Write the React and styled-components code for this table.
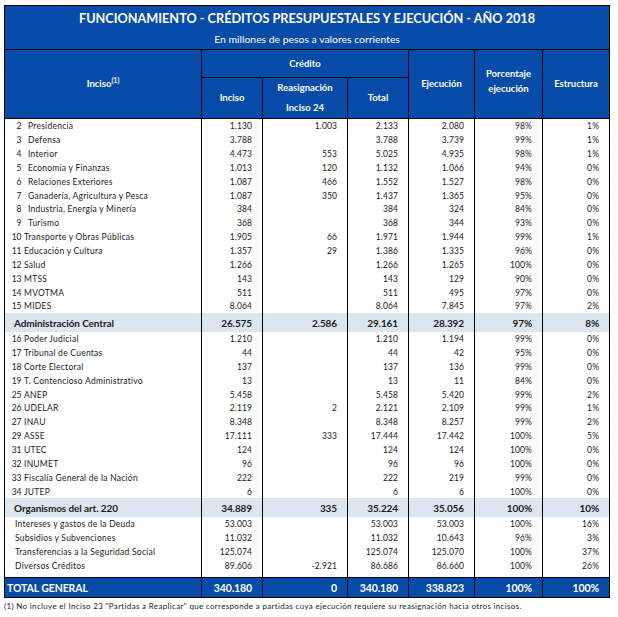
import React from 'react';
import styled, { createGlobalStyle } from 'styled-components';

const BLUE = '#064ca8';

const GlobalStyle = createGlobalStyle`
  body {
    margin: 0;
    background: #fff;
    font-family: Lato, "Liberation Sans", sans-serif;
  }
`;

const Page = styled.div`
  padding: 5px 0 0 4px;
  width: 605px;
`;

const Table = styled.table`
  width: 605px;
  border-collapse: collapse;
  table-layout: fixed;
  border: 1px solid #000;
  color: #1b1b1b;
`;

const TitleCell = styled.th`
  background: ${BLUE};
  color: #fff;
  height: 43px;
  padding: 0;
  border-bottom: 1px solid #000;
  text-align: center;
  vertical-align: top;
`;

const Title = styled.div`
  font-weight: 700;
  font-size: 12.7px;
  line-height: 16px;
  padding-top: 4px;
`;

const Subtitle = styled.div`
  font-weight: 400;
  font-size: 10.4px;
  line-height: 12px;
  padding-top: 7px;
`;

const HeadRow = styled.tr`
  height: ${p => p.$h}px;
`;

const HeadCell = styled.th`
  background: ${BLUE};
  color: #fff;
  font-weight: 700;
  font-size: 9.5px;
  line-height: ${p => p.$lh || 12}px;
  padding: ${p => p.$pad || '0'};
  border: 1px solid #000;
  text-align: center;
  vertical-align: middle;
`;

const Sup = styled.sup`
  font-size: 7px;
  vertical-align: 4px;
  line-height: 0;
`;

const Row = styled.tr`
  height: ${p => p.$h}px;
  background: ${p => p.$bg || 'transparent'};
  color: ${p => p.$color || 'inherit'};
  font-weight: ${p => (p.$bold ? 700 : 400)};
  font-size: ${p => p.$size}px;
  border-top: ${p => (p.$lined ? '1px solid #000' : 'none')};
`;

const Cell = styled.td`
  padding: 0 10px 0 0;
  text-align: right;
  white-space: nowrap;
  border-left: 1px solid #000;
  border-right: 1px solid #000;
  letter-spacing: ${p => (p.$bold ? '-0.1px' : '0.1px')};
`;

const NameCell = styled.td`
  padding: 0 0 0 ${p => p.$indent}px;
  text-align: left;
  white-space: nowrap;
  border-left: 1px solid #000;
  border-right: 1px solid #000;
  letter-spacing: ${p => (p.$bold ? '-0.1px' : '0.25px')};
`;

const Label = styled.div`
  display: flex;
  align-items: baseline;
`;

const Num = styled.span`
  flex: 0 0 16.5px;
  text-align: right;
  letter-spacing: 0;
`;

const Name = styled.span`
  margin-left: ${p => (p.$wide ? 2.5 : 6.5)}px;
`;

const Note = styled.p`
  margin: 3px 0 0;
  font-size: 8px;
  line-height: 10px;
  letter-spacing: 0.33px;
  color: #1b1b1b;
  white-space: nowrap;
`;

const centrales = [
  ['2', 'Presidencia', '1.130', '1.003', '2.133', '2.080', '98%', '1%'],
  ['3', 'Defensa', '3.788', '', '3.788', '3.739', '99%', '1%'],
  ['4', 'Interior', '4.473', '553', '5.025', '4.935', '98%', '1%'],
  ['5', 'Economía y Finanzas', '1.013', '120', '1.132', '1.066', '94%', '0%'],
  ['6', 'Relaciones Exteriores', '1.087', '466', '1.552', '1.527', '98%', '0%'],
  ['7', 'Ganadería, Agricultura y Pesca', '1.087', '350', '1.437', '1.365', '95%', '0%'],
  ['8', 'Industria, Energía y Minería', '384', '', '384', '324', '84%', '0%'],
  ['9', 'Turismo', '368', '', '368', '344', '93%', '0%'],
  ['10', 'Transporte y Obras Públicas', '1.905', '66', '1.971', '1.944', '99%', '1%'],
  ['11', 'Educación y Cultura', '1.357', '29', '1.386', '1.335', '96%', '0%'],
  ['12', 'Salud', '1.266', '', '1.266', '1.265', '100%', '0%'],
  ['13', 'MTSS', '143', '', '143', '129', '90%', '0%'],
  ['14', 'MVOTMA', '511', '', '511', '495', '97%', '0%'],
  ['15', 'MIDES', '8.064', '', '8.064', '7.845', '97%', '2%'],
];

const organismos = [
  ['16', 'Poder Judicial', '1.210', '', '1.210', '1.194', '99%', '0%'],
  ['17', 'Tribunal de Cuentas', '44', '', '44', '42', '95%', '0%'],
  ['18', 'Corte Electoral', '137', '', '137', '136', '99%', '0%'],
  ['19', 'T. Contencioso Administrativo', '13', '', '13', '11', '84%', '0%'],
  ['25', 'ANEP', '5.458', '', '5.458', '5.420', '99%', '2%'],
  ['26', 'UDELAR', '2.119', '2', '2.121', '2.109', '99%', '1%'],
  ['27', 'INAU', '8.348', '', '8.348', '8.257', '99%', '2%'],
  ['29', 'ASSE', '17.111', '333', '17.444', '17.442', '100%', '5%'],
  ['31', 'UTEC', '124', '', '124', '124', '100%', '0%'],
  ['32', 'INUMET', '96', '', '96', '96', '100%', '0%'],
  ['33', 'Fiscalía General de la Nación', '222', '', '222', '219', '99%', '0%'],
  ['34', 'JUTEP', '6', '', '6', '6', '100%', '0%'],
];

const otros = [
  ['Intereses y gastos de la Deuda', '53.003', '', '53.003', '53.003', '100%', '16%'],
  ['Subsidios y Subvenciones', '11.032', '', '11.032', '10.643', '96%', '3%'],
  ['Transferencias a la Seguridad Social', '125.074', '', '125.074', '125.070', '100%', '37%'],
  ['Diversos Créditos', '89.606', '-2.921', '86.686', '86.660', '100%', '26%'],
];

const ROW_H = 13.85;

function Values({ values, bold }) {
  return values.map((v, i) => (
    <Cell key={i} $bold={bold}>{v}</Cell>
  ));
}

function IncisoRow({ row }) {
  const [num, name, ...values] = row;
  return (
    <Row $h={ROW_H} $size={8.5}>
      <NameCell $indent={0}>
        <Label>
          <Num>{num}</Num>
          <Name $wide={num.length > 1}>{name}</Name>
        </Label>
      </NameCell>
      <Values values={values} />
    </Row>
  );
}

function PlainRow({ row }) {
  const [name, ...values] = row;
  return (
    <Row $h={ROW_H} $size={8.5}>
      <NameCell $indent={10}>{name}</NameCell>
      <Values values={values} />
    </Row>
  );
}

function BandRow({ row, total }) {
  const [name, ...values] = row;
  return (
    <Row
      $h={total ? 20 : 19}
      $bold
      $size={total ? 10.5 : 10}
      $bg={total ? BLUE : '#dce6f1'}
      $color={total ? '#fff' : undefined}
      $lined={total}
    >
      <NameCell $indent={total ? 2 : 9} $bold>{name}</NameCell>
      <Values values={values} bold />
    </Row>
  );
}

function Spacer({ h }) {
  return (
    <Row $h={h} $size={8}>
      {Array.from({ length: 7 }).map((_, i) => <Cell key={i} />)}
    </Row>
  );
}

export default function App() {
  return (
    <Page>
      <GlobalStyle />
      <Table>
        <colgroup>
          <col style={{ width: 197 }} />
          <col style={{ width: 61 }} />
          <col style={{ width: 85 }} />
          <col style={{ width: 61 }} />
          <col style={{ width: 66 }} />
          <col style={{ width: 68 }} />
          <col style={{ width: 67 }} />
        </colgroup>
        <thead>
          <tr>
            <TitleCell colSpan={7}>
              <Title>FUNCIONAMIENTO - CRÉDITOS PRESUPUESTALES Y EJECUCIÓN - AÑO 2018</Title>
              <Subtitle>En millones de pesos a valores corrientes</Subtitle>
            </TitleCell>
          </tr>
          <HeadRow $h={28}>
            <HeadCell rowSpan={2}>
              Inciso<Sup>(1)</Sup>
            </HeadCell>
            <HeadCell colSpan={3}>Crédito</HeadCell>
            <HeadCell rowSpan={2}>Ejecución</HeadCell>
            <HeadCell rowSpan={2} $lh={15} $pad="0 0 6px">
              Porcentaje<br />ejecución
            </HeadCell>
            <HeadCell rowSpan={2}>Estructura</HeadCell>
          </HeadRow>
          <HeadRow $h={39}>
            <HeadCell>Inciso</HeadCell>
            <HeadCell $lh={20}>Reasignación<br />Inciso 24</HeadCell>
            <HeadCell>Total</HeadCell>
          </HeadRow>
        </thead>
        <tbody>
          <Spacer h={1} />
          {centrales.map(r => <IncisoRow key={r[0]} row={r} />)}
          <BandRow row={['Administración Central', '26.575', '2.586', '29.161', '28.392', '97%', '8%']} />
          {organismos.map(r => <IncisoRow key={r[0]} row={r} />)}
          <BandRow row={['Organismos del art. 220', '34.889', '335', '35.224', '35.056', '100%', '10%']} />
          {otros.map(r => <PlainRow key={r[0]} row={r} />)}
          <Spacer h={5} />
          <BandRow total row={['TOTAL GENERAL', '340.180', '0', '340.180', '338.823', '100%', '100%']} />
        </tbody>
      </Table>
      <Note>
        (1) No incluye el Inciso 23 "Partidas a Reaplicar" que corresponde a partidas cuya ejecución requiere su reasignación hacia otros incisos.
      </Note>
    </Page>
  );
}
